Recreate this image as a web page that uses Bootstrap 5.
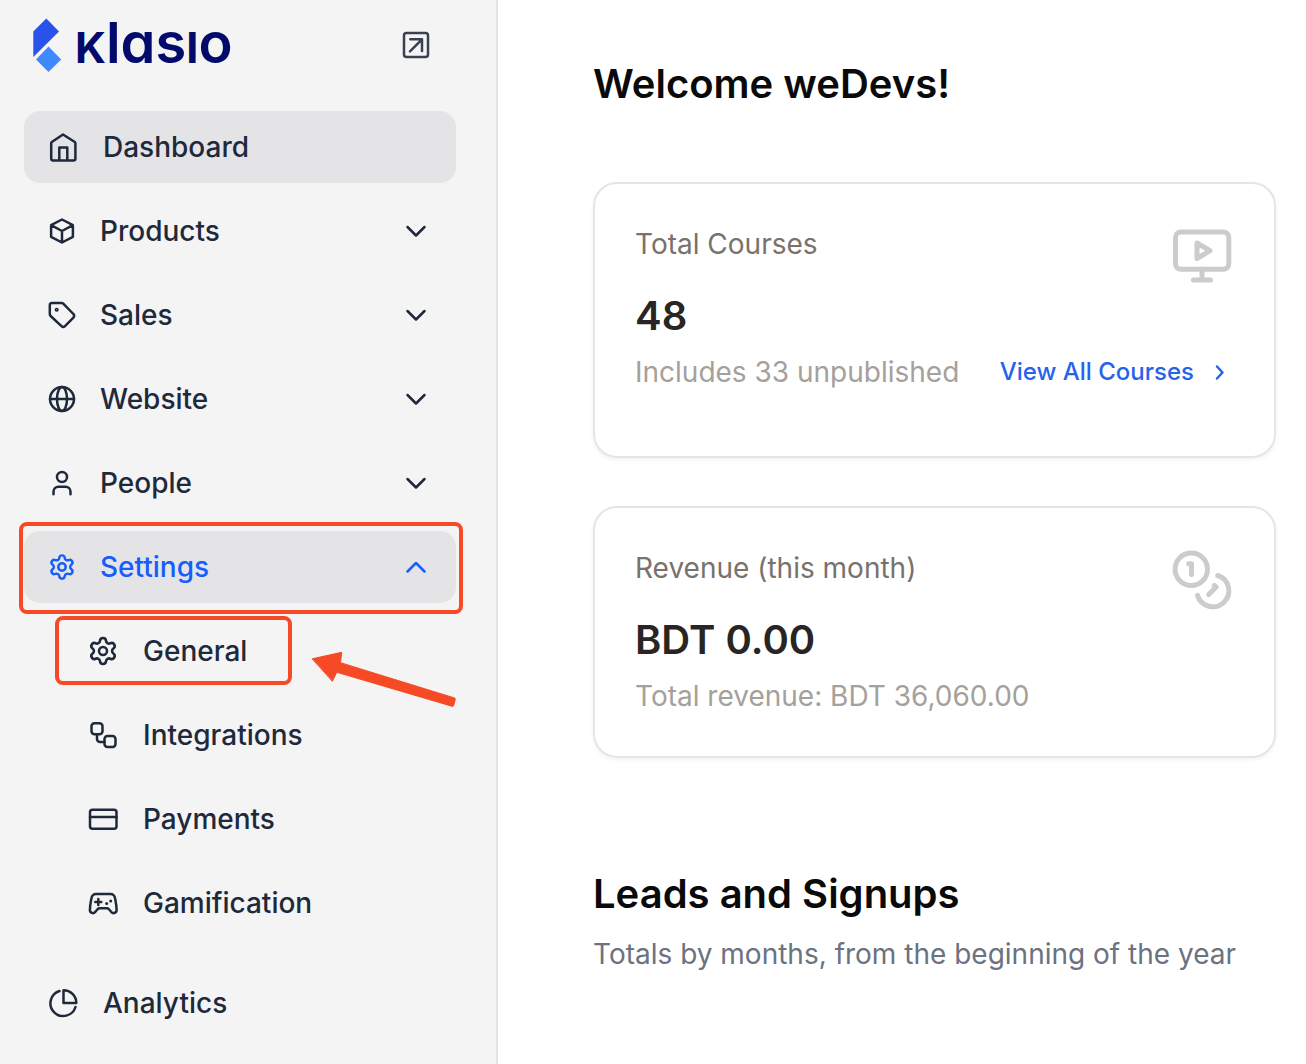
<!DOCTYPE html>
<html lang="en">
<head>
<meta charset="utf-8">
<meta name="viewport" content="width=device-width, initial-scale=1">
<title>Klasio Dashboard</title>
<link rel="stylesheet" href="https://cdn.jsdelivr.net/npm/bootstrap@5.3.0/dist/css/bootstrap.min.css">
<style>
body{font-family:Inter,"Liberation Sans",sans-serif;font-size:28px;line-height:40px;color:#0a0a0a;background:#fff}
svg{fill:none;stroke:currentColor;stroke-width:2.5;stroke-linecap:round;stroke-linejoin:round;display:block;flex-shrink:0}
.side{width:498px;background:#f4f4f4;border-right:2px solid #e4e4e7;padding:0 40px 24px 24px}
.side-head{height:111px;padding:17px 24px 0 8px}
.brand{color:#020a6b;font-weight:600;font-size:56px;line-height:52px;gap:11px}
.brand-name{font-feature-settings:"cv11"}
.brand-cap{font-size:43px;font-weight:700;text-transform:uppercase}
.brand-mark{stroke:none}
.open-btn{color:#374151;width:32px;height:56px}
.menu{gap:12px}
.item{height:72px;padding:0 24px 0 22px;border-radius:16px;color:#1e293b;font-weight:500;text-decoration:none;gap:22px;border:0;background:transparent;width:100%;text-align:left}
.item-single{padding-left:23px;gap:24px}
.item-sub{padding-left:63px;gap:24px}
.item-on{background:#e4e4e7}
.item-open{color:#155dfc}
.menu-last{margin-top:16px}
.ring{border:4px solid #f54a25;border-radius:8px;position:absolute;pointer-events:none}
.ring-settings{inset:-9px -7px -11px -5px}
.ring-general{inset:1px 164px 2px 31px}
.arrow{position:absolute;left:288px;top:35px;fill:#f54a25;stroke:#f54a25;stroke-width:1}
.content{padding:60px 30px 48px 95px}
.title{font-size:40px;line-height:48px;font-weight:600;margin:0;color:#0a0a0a}
.cards{gap:48px;margin-top:74px}
.stat{border:2px solid #e5e5e5;border-radius:24px;padding:40px 40px 0;box-shadow:0 2px 4px rgba(0,0,0,.05)}
.stat-tall{padding-bottom:64px}
.stat-short{padding-bottom:40px}
.stat-label{color:#79716b}
.stat-value{font-size:40px;line-height:48px;font-weight:600;color:#292524;margin:4px 0 12px}
.stat-note{color:#a6a09b}
.stat-icon{color:#ccc;stroke-width:5}
.more{font-size:24px;font-weight:500;color:#2563eb;text-decoration:none;gap:12px}
.leads{margin-top:112px}
.leads-note{color:#6b7280;margin-top:16px}
</style>
</head>
<body>
<div class="d-flex min-vh-100">
  <aside class="side flex-shrink-0">
    <div class="side-head d-flex justify-content-between align-items-start">
      <a href="#" class="brand d-flex text-decoration-none">
        <svg class="brand-mark" width="32" height="56"><path fill="#2952ea" d="M14.300 1.500 27 14.500 1.300 40V14.500z"/><path fill="#3f88ff" d="M16.500 29.500 29.200 42.500 16.500 55 4 42.500z"/></svg>
        <span class="brand-name"><span class="brand-cap">k</span>las<span class="brand-cap">i</span>o</span>
      </a>
      <a href="#" class="open-btn d-flex align-items-center" aria-label="Open site"><svg width="32" height="32"><rect x="4" y="4" width="24" height="24" rx="2.500"/><path d="M10.300 10.300H22V22M22 10.300 10 22.300"/></svg></a>
    </div>
    <nav class="menu d-flex flex-column">
      <a href="#" class="item item-single item-on d-flex align-items-center"><svg width="32" height="32"><path d="M4.200 12.200Q4.200 11.400 4.800 11L16 3.500 27.800 11Q28.400 11.400 28.400 12.200V27.500a2 2 0 0 1-2 2H6.200a2 2 0 0 1-2-2zM12.300 29.500V16.500h8v13"/></svg>Dashboard</a>
      <button type="button" class="item d-flex align-items-center"><svg width="32" height="32"><path d="M16 4.500 26.900 10.200V21.800L16 27.500 5.100 21.800V10.200zM5.100 10.200 16 16 26.900 10.200M16 16V27.500"/></svg>Products<svg class="ms-auto" width="32" height="32"><path d="M7.500 12 16 20.500 24.500 12"/></svg></button>
      <button type="button" class="item d-flex align-items-center"><svg width="32" height="32"><path d="M6 4H15.500c.8 0 1.400.3 2 .8L27.400 15a2.500 2.500 0 0 1 0 3.600L19 27.200a2.500 2.500 0 0 1-3.500 0L4.600 17c-.5-.6-.8-1.200-.8-2V6A2 2 0 0 1 6 4z"/><circle cx="10.700" cy="10.700" r=".8"/></svg>Sales<svg class="ms-auto" width="32" height="32"><path d="M7.500 12 16 20.500 24.500 12"/></svg></button>
      <button type="button" class="item d-flex align-items-center"><svg width="32" height="32"><circle cx="16" cy="16" r="12"/><ellipse cx="16" cy="16" rx="5" ry="12"/><path d="M4 16H28"/></svg>Website<svg class="ms-auto" width="32" height="32"><path d="M7.500 12 16 20.500 24.500 12"/></svg></button>
      <button type="button" class="item d-flex align-items-center"><svg width="32" height="32"><circle cx="16" cy="10" r="5"/><path d="M7.500 27.200V24.700a5 5 0 0 1 5-5h7a5 5 0 0 1 5 5v2.500"/></svg>People<svg class="ms-auto" width="32" height="32"><path d="M7.500 12 16 20.500 24.500 12"/></svg></button>
      <div class="position-relative">
        <button type="button" class="item item-on item-open d-flex align-items-center" aria-expanded="true"><svg width="32" height="32"><path transform="translate(2 2) scale(1.167)" stroke-width="2.100" d="M9.671 4.136a2.340 2.340 0 0 1 4.659 0 2.340 2.340 0 0 0 3.319 1.915 2.340 2.340 0 0 1 2.330 4.033 2.340 2.340 0 0 0 0 3.831 2.340 2.340 0 0 1-2.330 4.033 2.340 2.340 0 0 0-3.319 1.915 2.340 2.340 0 0 1-4.659 0 2.340 2.340 0 0 0-3.320-1.915 2.340 2.340 0 0 1-2.330-4.033 2.340 2.340 0 0 0 0-3.831A2.340 2.340 0 0 1 6.350 6.051a2.340 2.340 0 0 0 3.319-1.915"/><circle cx="16" cy="16" r="3.700"/></svg>Settings<svg class="ms-auto" width="32" height="32"><path d="M7.500 20.500 16 12 24.500 20.500"/></svg></button>
        <span class="ring ring-settings"></span>
      </div>
      <div class="position-relative">
        <a href="#" class="item item-sub d-flex align-items-center"><svg width="32" height="32"><path transform="translate(.4 .4) scale(1.300)" stroke-width="2" d="M9.671 4.136a2.340 2.340 0 0 1 4.659 0 2.340 2.340 0 0 0 3.319 1.915 2.340 2.340 0 0 1 2.330 4.033 2.340 2.340 0 0 0 0 3.831 2.340 2.340 0 0 1-2.330 4.033 2.340 2.340 0 0 0-3.319 1.915 2.340 2.340 0 0 1-4.659 0 2.340 2.340 0 0 0-3.320-1.915 2.340 2.340 0 0 1-2.330-4.033 2.340 2.340 0 0 0 0-3.831A2.340 2.340 0 0 1 6.350 6.051a2.340 2.340 0 0 0 3.319-1.915"/><circle cx="16" cy="16" r="4"/></svg>General</a>
        <span class="ring ring-general"></span>
        <svg class="arrow" width="146" height="60"><path d="M.5 8.700 29.700 2.300 28.500 12.700 142 47.800a1.500 1.500 0 0 1 1.200 2L141.800 55a1.500 1.500 0 0 1-2 1.200L24.800 22.300 20.500 31z"/></svg>
      </div>
      <a href="#" class="item item-sub d-flex align-items-center"><svg width="32" height="32"><rect x="4.500" y="4.300" width="11" height="11" rx="3"/><rect x="17.500" y="17" width="11" height="11" rx="3"/><path d="M10 15.300V20a3 3 0 0 0 3 3H17.500"/></svg>Integrations</a>
      <a href="#" class="item item-sub d-flex align-items-center"><svg width="32" height="32"><rect x="3" y="6.700" width="26.500" height="19" rx="2.500"/><path d="M3 14H29.500"/></svg>Payments</a>
      <a href="#" class="item item-sub d-flex align-items-center"><svg width="32" height="32"><path d="M9 7H23.500a4.500 4.500 0 0 1 4.500 4C28.800 15 29.600 18.500 29.600 23a3 3 0 0 1-5.300 2L22 22.300c-.7-.7-1.200-1-2-1H12.500c-.8 0-1.300.3-2 1L8.200 25a3 3 0 0 1-5.300-2C2.900 18.500 3.700 15 4.500 11A4.500 4.500 0 0 1 9 7zM11.300 12V18M8.300 15h6"/><g stroke="none" fill="currentColor"><circle cx="19.700" cy="16.500" r="1.500"/><circle cx="23.700" cy="14" r="1.500"/></g></svg>Gamification</a>
      <a href="#" class="item item-single menu-last d-flex align-items-center"><svg width="32" height="32"><path d="M12.500 4A12.800 12.800 0 1 0 28.500 20"/><path d="M16.500 3.200A12.800 12.800 0 0 1 29.300 16H16.500z"/></svg>Analytics</a>
    </nav>
  </aside>
  <main class="content flex-grow-1">
    <h1 class="title">Welcome weDevs!</h1>
    <div class="cards d-flex flex-column">
      <section class="stat stat-tall">
        <div class="d-flex justify-content-between"><span class="stat-label">Total Courses</span><svg class="stat-icon" width="64" height="64"><rect x="5.500" y="8" width="53.300" height="37.300" rx="5.500"/><path d="M32 45.500V56M23.500 56H40.500M27 19V34.500L40 26.700Z"/></svg></div>
        <div class="stat-value">48</div>
        <div class="d-flex justify-content-between"><span class="stat-note">Includes 33 unpublished</span><a href="#" class="more me-n1 d-flex align-items-center">View All Courses<svg class="more-chevron" width="28" height="32"><path d="M11 10.500 16.500 16.500 11 22.500"/></svg></a></div>
      </section>
      <section class="stat stat-short">
        <div class="d-flex justify-content-between"><span class="stat-label">Revenue (this month)</span><svg class="stat-icon" width="64" height="64"><circle cx="21.300" cy="21.300" r="16.200"/><path d="M18.700 15.700H21.500V26.500M47.700 27.500A16 16 0 1 1 27.500 47.300M44.300 37.300 46.200 39 38.700 46.500"/></svg></div>
        <div class="stat-value">BDT 0.00</div>
        <div class="stat-note">Total revenue: BDT 36,060.00</div>
      </section>
    </div>
    <section class="leads">
      <h2 class="title">Leads and Signups</h2>
      <p class="leads-note mb-0">Totals by months, from the beginning of the year</p>
    </section>
  </main>
</div>
<script src="https://cdn.jsdelivr.net/npm/bootstrap@5.3.0/dist/js/bootstrap.bundle.min.js"></script>
</body>
</html>
